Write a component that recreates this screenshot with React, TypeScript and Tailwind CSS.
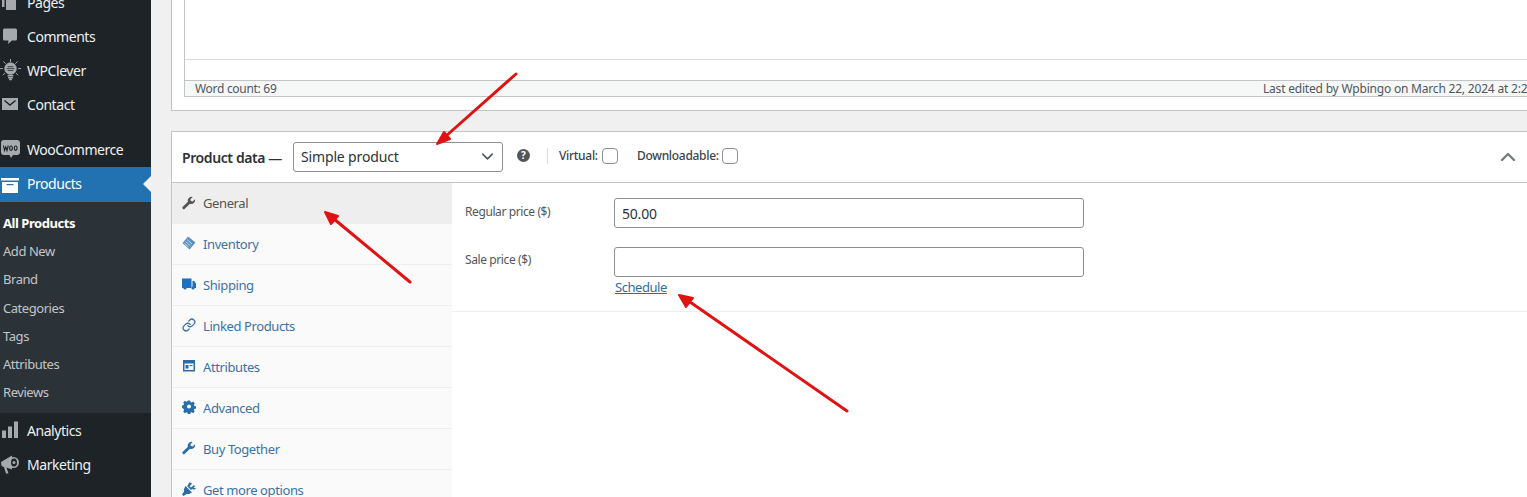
import { ChevronDown, ChevronUp, Link } from 'lucide-react';
import type { ReactNode } from 'react';

/* ─── sidebar icons ─── */

const iconCls = 'w-[18px] h-[18px] shrink-0';

const PagesIcon = () => (
  <svg viewBox="0 0 18 18" className={iconCls} fill="#a7aaad">
    <path d="M1 1h11v2H3.500v11H1z" />
    <path d="M5 4h10v13H5z" />
  </svg>
);
const CommentsIcon = () => (
  <svg viewBox="0 0 18 18" className={iconCls} fill="#a7aaad">
    <path d="M3.500 1.500h11a1.500 1.500 0 0 1 1.500 1.500v9a1.500 1.500 0 0 1-1.500 1.500H11l-4 3.500.500-3.500h-4A1.500 1.500 0 0 1 2 12V3a1.500 1.500 0 0 1 1.500-1.500z" />
  </svg>
);
const BulbIcon = () => (
  <svg viewBox="0 0 22 26" className="w-[21px] h-[25px] shrink-0 -ml-px mt-[1px]" fill="none" stroke="#a7aaad" strokeWidth="1">
    <circle cx="11" cy="11" r="6" fill="#a7aaad" />
    <path d="M7 11h8M8 9h6M8 13h6" stroke="#1d2327" strokeWidth=".8" />
    <path d="M8 18.500h6M8.500 20.500h5M9.500 22.500h3" strokeWidth="1.500" />
    <path d="M11 1v3M3.500 3.500l2.500 2.500M18.500 3.500 16 6M0 11h3M19 11h3M3 18l2.500-2.500M19 18l-2.500-2.500" />
  </svg>
);
const MailIcon = () => (
  <svg viewBox="0 0 18 18" className={iconCls} fill="#a7aaad">
    <path d="M1 3h16v12H1z" />
    <path d="M3.500 5.500 9 10l5.500-4.500" fill="none" stroke="#1d2327" strokeWidth="1.400" />
  </svg>
);
const WooIcon = () => (
  <svg viewBox="0 0 19 20" className="w-[19px] h-[20px] shrink-0" fill="#a7aaad">
    <path d="M3 1h13a3 3 0 0 1 3 3v9a3 3 0 0 1-3 3h-4l-2 3-1.500-3H3a3 3 0 0 1-3-3V4a3 3 0 0 1 3-3z" />
    <path d="M2.500 6.500l1 5 1.300-3.500 1.200 3.500 1.300-5M10 7a1.400 2.200 0 1 0 .01 0M14.700 7a1.400 2.200 0 1 0 .01 0" fill="none" stroke="#1d2327" strokeWidth="1.100" />
  </svg>
);
const ArchiveIcon = () => (
  <svg viewBox="0 0 18 18" className={iconCls} fill="#fff">
    <path d="M0 2h18v2.500H0z" />
    <path d="M1 6h16v11H1z" />
    <path d="M5.500 8h7v1.200h-7z" fill="#2271b1" />
  </svg>
);
const BarsIcon = () => (
  <svg viewBox="0 0 18 18" className={iconCls} fill="#a7aaad">
    <path d="M1 9.500h4V17H1zM7 5.500h4V17H7zM13 0.500h4V17h-4z" />
  </svg>
);
const MegaphoneIcon = () => (
  <svg viewBox="0 0 18 20" className="w-[18px] h-[20px] shrink-0" fill="#a7aaad">
    <path d="M0 8l11-6.500v14L5.500 13.500l2 6H5L3 13 0.500 12z" />
    <circle cx="12.500" cy="8.500" r="5.500" />
    <ellipse cx="13" cy="8.500" rx="3" ry="4" fill="#1d2327" />
    <circle cx="13" cy="8.500" r="1.500" />
  </svg>
);

/* ─── tab icons ─── */

const tabIcon = 'w-[14px] h-[14px] shrink-0';

const WrenchIcon = ({ color }: { color: string }) => (
  <svg viewBox="0 0 14 14" className={tabIcon} fill={color}>
    <path d="M13 3.200 10.600 5.400 8.800 5 8.400 3.300 10.700 1A3.800 3.800 0 0 0 5.900 5.700L.8 10.800a1.400 1.400 0 0 0 2 2l5.200-5.100A3.800 3.800 0 0 0 13 3.200z" />
  </svg>
);
const TagIcon = () => (
  <svg viewBox="0 0 14 14" className={tabIcon} fill="#5b8fc0">
    <path d="M6 .5l7.500 6-6 7L.5 7z" />
    <path d="M5 3.500l5 4.500M3.500 5.500l5 4.500M2.500 7.500l4 3.500" stroke="#d5e3f0" strokeWidth=".9" fill="none" />
  </svg>
);
const TruckIcon = () => (
  <svg viewBox="0 0 14 14" className={tabIcon} fill="#1f6fbf">
    <path d="M0 1.500h9.500V11H0zM10.500 4h1.800L14 6.800V11h-3.500z" />
    <circle cx="3" cy="11" r="1.600" />
    <circle cx="11" cy="11" r="1.600" />
  </svg>
);
const CardIcon = () => (
  <svg viewBox="0 0 14 14" className={tabIcon} fill="#2a6ea8">
    <path fillRule="evenodd" d="M1 1h12v11.500H1zM2.500 4.500v6.500h9V4.500z" />
    <path d="M3.500 6h3v3.500h-3zM7.500 6h3v1h-3z" />
  </svg>
);
const GearIcon = () => (
  <svg viewBox="0 0 14 14" className={tabIcon} fill="#2a6ea8">
    <path
      fillRule="evenodd"
      d="M5.800 1h2.400l.3 1.600 1.200.5 1.400-.9 1.700 1.700-.9 1.400.5 1.200 1.600.3v2.400l-1.600.3-.5 1.200.9 1.400-1.700 1.700-1.400-.9-1.200.5-.3 1.600H5.800l-.3-1.600-1.200-.5-1.400.9-1.700-1.700.9-1.400-.5-1.200L0 8.400V6l1.600-.3.5-1.200-.9-1.400 1.700-1.700 1.400.9 1.200-.5zM7 5.200a2 2 0 1 0 0 4 2 2 0 0 0 0-4z"
      transform="translate(0 -.6)"
    />
  </svg>
);
const PlugIcon = () => (
  <svg viewBox="0 0 14 14" className={tabIcon} fill="#2a6ea8">
    <path d="M3.500 4l6.500 6.500-3 1.500H4.500L1.500 14 0 12.500 2 9.500V7zM6.500 1.500 8 0v4l-1.500-1zM10 6h4l-1.500 1.500-1.500 0z" />
    <path d="M5 4 8.500.5l1.500 1-2.500 3 1.500 1 3-2.500 1 1.500L9 8z" />
  </svg>
);

/* ─── data ─── */

const topItems: { label: string; icon: ReactNode }[] = [
  { label: 'Pages', icon: <PagesIcon /> },
  { label: 'Comments', icon: <CommentsIcon /> },
  { label: 'WPClever', icon: <BulbIcon /> },
  { label: 'Contact', icon: <MailIcon /> },
];

const subItems = ['Add New', 'Brand', 'Categories', 'Tags', 'Attributes', 'Reviews'];

const tabs: { label: string; icon: ReactNode }[] = [
  { label: 'Inventory', icon: <TagIcon /> },
  { label: 'Shipping', icon: <TruckIcon /> },
  { label: 'Linked Products', icon: <Link size={14} color="#3b72a5" strokeWidth={2.2} /> },
  { label: 'Attributes', icon: <CardIcon /> },
  { label: 'Advanced', icon: <GearIcon /> },
  { label: 'Buy Together', icon: <WrenchIcon color="#2a6ea8" /> },
  { label: 'Get more options', icon: <PlugIcon /> },
];

function MenuRow({ label, icon }: { label: string; icon: ReactNode }) {
  return (
    <div className="h-[34px] flex items-center pl-px">
      <span className="w-[26px] flex items-center">{icon}</span>
      <span className="text-[14px] text-[#f0f0f1] tracking-[-0.45px]">{label}</span>
    </div>
  );
}

function Sidebar() {
  return (
    <aside className="w-[151px] shrink-0 bg-[#1d2327] h-[497px] overflow-hidden">
      <div className="-mt-[15px]">
        {topItems.map((i) => (
          <MenuRow key={i.label} label={i.label} icon={i.icon} />
        ))}
      </div>
      <div className="h-[11px]" />
      <div className="h-[35px]">
        <MenuRow label="WooCommerce" icon={<WooIcon />} />
      </div>
      <div className="relative h-[35px] bg-[#2271b1] flex items-center pl-px">
        <span className="w-[26px] flex items-center">
          <ArchiveIcon />
        </span>
        <span className="text-[14px] text-white tracking-[-0.45px] -mt-[2px]">Products</span>
        <span className="absolute right-0 top-[9px] border-y-[8px] border-r-[8px] border-y-transparent border-r-[#f0f0f1]" />
      </div>
      <div className="bg-[#2c3338] h-[211px] pt-[8px] pl-[3px] text-[13px] text-[#c3c4c7] tracking-[-0.45px]">
        <div className="h-[28px] flex items-center font-bold text-white">All Products</div>
        {subItems.map((s) => (
          <div key={s} className="h-[28.15px] flex items-center">
            {s}
          </div>
        ))}
      </div>
      <MenuRow label="Analytics" icon={<BarsIcon />} />
      <MenuRow label="Marketing" icon={<MegaphoneIcon />} />
    </aside>
  );
}

function EditorBox() {
  return (
    <div className="w-[1450px] h-[111px] border border-t-0 border-[#c3c4c7] bg-white pl-[12px] pb-[13px]">
      <div className="h-full border-l border-[#c3c4c7] flex flex-col">
        <div className="h-[60px] border-b border-[#dcdcde]" />
        <div className="h-[20px]" />
        <div className="h-[17px] bg-[#f6f7f7] border-y border-[#c3c4c7] flex items-center justify-between pl-[10px] text-[12px] text-[#50575e] tracking-[-0.3px]">
          <span>Word count: 69</span>
          <span className="w-[357px] shrink-0 tracking-[-0.2px] whitespace-nowrap">Last edited by Wpbingo on March 22, 2024 at 2:24 pm</span>
        </div>
      </div>
    </div>
  );
}

function ProductData() {
  return (
    <div className="mt-[20px] w-[1450px] border border-b-0 border-[#c3c4c7] bg-white h-[366px]">
      {/* Header */}
      <div className="h-[51px] border-b border-[#c3c4c7] flex items-center relative">
        <span className="ml-[10px] w-[111px] text-[14px] font-semibold text-[#2c3338] tracking-[-0.4px] whitespace-nowrap">
          Product data —
        </span>
        <div className="w-[210px] h-[30px] mt-[-1px] border border-[#8c8f94] rounded-[3px] flex items-center justify-between pl-[7px] pr-[5px]">
          <span className="text-[14px] text-[#2c3338] tracking-[-0.15px]">Simple product</span>
          <ChevronDown size={19} color="#50575e" strokeWidth={2} />
        </div>
        <span className="ml-[14px] mb-[3px] w-[13px] h-[13px] rounded-full bg-[#555] text-white text-[10px] font-bold flex items-center justify-center">
          ?
        </span>
        <span className="ml-[17px] mb-[3px] w-px h-[16px] bg-[#dcdcde]" />
        <label className="ml-[11px] mb-[3px] flex items-center text-[12px] font-medium text-[#3c434a] tracking-[-0.3px]">
          <span className="w-[43px]">Virtual:</span>
          <span className="w-[16px] h-[16px] border border-[#8c8f94] rounded-[4px] bg-white" />
        </label>
        <label className="ml-[19px] mb-[3px] flex items-center text-[12px] font-medium text-[#3c434a] tracking-[-0.3px]">
          <span className="w-[85px]">Downloadable:</span>
          <span className="w-[16px] h-[16px] border border-[#8c8f94] rounded-[4px] bg-white" />
        </label>
        <ChevronUp size={24} color="#787c82" strokeWidth={2.4} className="absolute left-[1324px] top-[13px]" />
      </div>

      {/* Body */}
      <div className="flex">
        <div className="w-[280px] shrink-0 bg-[#fafafa] h-[320px]">
          <div className="h-[41px] bg-[#eeeeee] flex items-center pl-[10px] gap-[7px] text-[13px] text-[#555] tracking-[-0.4px]">
            <span className="-mt-[2px]">
              <WrenchIcon color="#555" />
            </span>
            General
          </div>
          {tabs.map((t) => (
            <div
              key={t.label}
              className="h-[41px] border-b border-[#eeeeee] flex items-center pl-[10px] gap-[7px] text-[13px] text-[#3b72a5] tracking-[-0.4px]"
            >
              <span className="-mt-[2px]">{t.icon}</span>
              <span className="mt-[2px]">{t.label}</span>
            </div>
          ))}
        </div>
        <div className="flex-1">
          <div className="h-[129px] border-b border-[#eeeeee] pt-[15px] pl-[13px]">
            <div className="flex items-start h-[49px]">
              <span className="w-[149px] pt-[5px] text-[12px] text-[#50575e] tracking-[-0.4px]">Regular price ($)</span>
              <div className="w-[470px] h-[30px] border border-[#8c8f94] rounded-[3px] flex items-center pl-[7px] text-[14px] text-[#2c3338] tracking-[-0.2px]">
                50.00
              </div>
            </div>
            <div className="flex items-start">
              <span className="w-[149px] pt-[4px] text-[12px] text-[#50575e] tracking-[-0.4px]">Sale price ($)</span>
              <div>
                <div className="w-[470px] h-[30px] border border-[#8c8f94] rounded-[3px]" />
                <span className="pl-px text-[13px] text-[#2e6e9e] underline tracking-[-0.45px] leading-[20px] block">Schedule</span>
              </div>
            </div>
          </div>
        </div>
      </div>
    </div>
  );
}

/* red annotation arrows drawn over the screenshot */
function Arrows() {
  const lines = [
    { body: 'M516 74 446 136', head: 'M437 144 450 139 444 132z' },
    { body: 'M410 282 334 219', head: 'M325 212 331 224 338 216z' },
    { body: 'M847 411 690 302', head: 'M679 295 686 307 693 298z' },
  ];
  return (
    <svg className="absolute inset-0 w-[1527px] h-[497px] pointer-events-none" viewBox="0 0 1527 497">
      {lines.map((l) => (
        <g key={l.body}>
          <path d={l.body} stroke="#e01212" strokeWidth="3" fill="none" strokeLinecap="round" />
          <path d={l.head} fill="#e01212" stroke="#e01212" strokeWidth="2" strokeLinejoin="round" />
        </g>
      ))}
    </svg>
  );
}

export default function App() {
  return (
    <div
      className="relative w-[1527px] h-[497px] overflow-hidden flex bg-[#f0f0f1]"
      style={{ fontFamily: '"Noto Sans", sans-serif' }}
    >
      <Sidebar />
      <main className="flex-1 pl-[20px] overflow-hidden">
        <EditorBox />
        <ProductData />
      </main>
      <Arrows />
    </div>
  );
}
